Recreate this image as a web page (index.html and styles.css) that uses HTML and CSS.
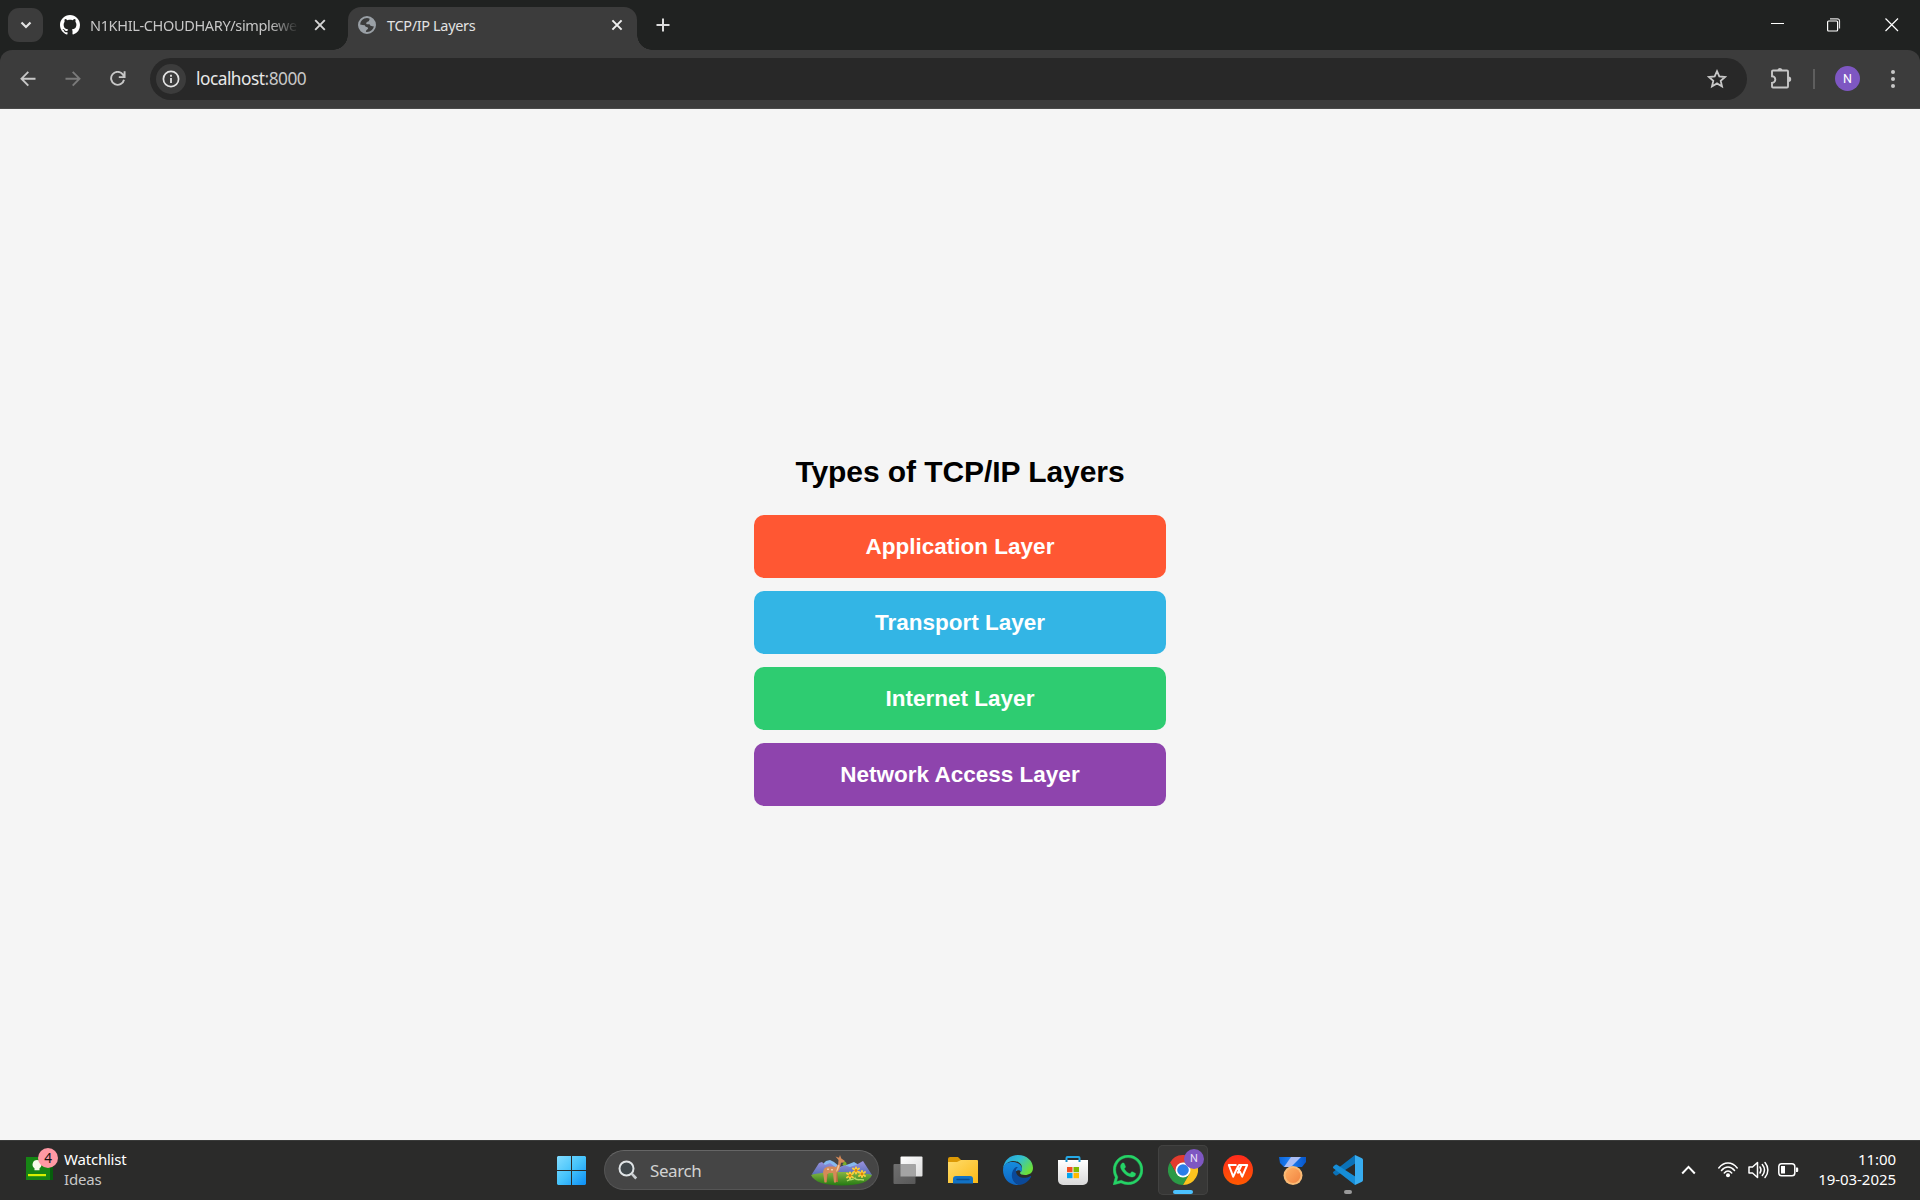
FILE: index.html
```html
<!DOCTYPE html>
<html lang="en">
<head>
<meta charset="utf-8">
<title>TCP/IP Layers</title>
<link rel="stylesheet" href="styles.css">
</head>
<body>
<header class="tabstrip">
  <button class="tab-search" aria-label="Search tabs"><svg width="12" height="8" viewBox="0 0 12 8"><path d="M1.500 1.500 6 6l4.500-4.500" fill="none" stroke="#e3e3e3" stroke-width="2.200"/></svg></button>
  <div class="tab">
    <svg class="github" width="20" height="20" viewBox="0 0 16 16"><path fill="#fff" d="M8 0C3.580 0 0 3.580 0 8c0 3.540 2.290 6.530 5.470 7.590.4.070.550-.170.550-.380 0-.190-.010-.820-.010-1.490-2.010.370-2.530-.490-2.690-.940-.090-.230-.480-.940-.820-1.130-.280-.150-.680-.520-.010-.530.630-.010 1.080.580 1.230.820.720 1.210 1.870.870 2.330.660.070-.520.280-.870.510-1.070-1.780-.2-3.640-.890-3.640-3.950 0-.870.310-1.590.820-2.150-.080-.2-.360-1.020.080-2.120 0 0 .670-.210 2.200.820.640-.180 1.320-.270 2-.270s1.360.090 2 .270c1.530-1.040 2.200-.820 2.200-.820.440 1.100.160 1.920.080 2.120.510.560.820 1.270.820 2.150 0 3.070-1.870 3.750-3.650 3.950.290.250.540.730.540 1.480 0 1.070-.010 1.930-.010 2.200 0 .210.150.460.550.380A8.010 8.010 0 0 0 16 8c0-4.420-3.580-8-8-8Z"/></svg>
    <span class="tab-title fade">N1KHIL-CHOUDHARY/simplewe</span>
    <svg class="tab-close" width="12" height="12" viewBox="0 0 12 12"><path d="m1.200 1.200 9.600 9.600m0-9.600-9.600 9.600" stroke="#d5d5d5" stroke-width="1.900"/></svg>
  </div>
  <div class="tab active">
    <svg class="globe" width="18" height="18" viewBox="0 0 18 18"><circle cx="9" cy="9" r="8" fill="#3c3c3c" stroke="#9aa0a6" stroke-width="2"/><path fill="#9aa0a6" d="M11.300 1.300c3 .9 5.500 4 5.500 7.700l-1.300 1.500-3-.8-1-1.500H8.700L8 7l1.800-1.500 1-.3.800-2zM1.300 8.300l3.200.6 2.200.4 1 1.500 1.900.4.500 1.600-1.800 1.400-.6 2.400C4 16.400 1.100 13 1.300 8.300Z"/></svg>
    <span class="tab-title">TCP/IP Layers</span>
    <svg class="tab-close" width="12" height="12" viewBox="0 0 12 12"><path d="m1.400 1.400 9.200 9.200m0-9.200-9.200 9.200" stroke="#f0f0f0" stroke-width="2"/></svg>
  </div>
  <svg class="new-tab" width="14" height="14" viewBox="0 0 14 14"><path d="M7 .5v13M.5 7h13" stroke="#dcdcdc" stroke-width="2"/></svg>
  <div class="window-controls">
    <svg width="14" height="14" viewBox="0 0 14 14"><path d="M0 5.500h13" stroke="#fff"/></svg>
    <svg width="14" height="14" viewBox="0 0 14 14"><path d="M3 .8h7.500a2 2 0 0 1 2 2v7.700" fill="none" stroke="#ddd" stroke-width="1.200"/><rect x=".6" y="3" width="10" height="10" rx="1" fill="none" stroke="#fff" stroke-width="1.200"/></svg>
    <svg width="14" height="14" viewBox="0 0 14 14"><path d="m.5.500 12.500 12.500m0-12.500L.5 13" stroke="#fff" stroke-width="1.200"/></svg>
  </div>
</header>
<nav class="toolbar">
  <div class="nav-buttons">
    <svg width="16" height="16" viewBox="0 0 16 16"><path d="M8.300.8 1.500 7.700l6.800 6.900M1.500 7.700H15.500" fill="none" stroke="#c7c7c7" stroke-width="1.900"/></svg>
    <svg width="16" height="16" viewBox="0 0 16 16"><path d="m7.700.8 6.800 6.900-6.800 6.900M14.500 7.700H.5" fill="none" stroke="#7a7a7a" stroke-width="1.900"/></svg>
    <svg width="16" height="16" viewBox="0 0 16 16"><path d="M14 8.700A6.500 6.500 0 1 1 12.800 3.400L14 5.200M14.600.2v5.900H8.800" fill="none" stroke="#c7c7c7" stroke-width="1.900"/></svg>
  </div>
  <div class="omnibox">
    <span class="site-info"><svg width="18" height="18" viewBox="0 0 18 18"><circle cx="9" cy="9" r="7.600" fill="none" stroke="#e3e3e3" stroke-width="1.700"/><path d="M9 8v5M9 4.800v1.900" stroke="#e3e3e3" stroke-width="1.800"/></svg></span>
    <span class="url">localhost<span class="port">:8000</span></span>
    <svg class="star" width="20" height="20" viewBox="0 0 20 20"><path d="m10 2.200 2.300 5.200 5.700.6-4.300 3.800 1.300 5.600-5-3-5 3 1.300-5.600L2 8l5.700-.6Z" fill="none" stroke="#c7c7c7" stroke-width="1.800"/></svg>
  </div>
  <svg class="extensions" width="21" height="21" viewBox="0 0 21 21"><path d="M2.500 2.500H16a1 1 0 0 1 1 1v15a1 1 0 0 1-1 1H2a1 1 0 0 1-1-1v-3.600a3.300 3.300 0 0 0 0-6.600V3.500a1 1 0 0 1 1-1Z" fill="none" stroke="#c7c7c7" stroke-width="1.900"/><path d="M6.500 2.500a2.500 2.500 0 0 1 5 0ZM17.500 8.500a2.700 2.700 0 0 1 0 5.400Z" fill="#c7c7c7"/></svg>
  <span class="divider"></span>
  <span class="avatar">N</span>
  <svg class="menu" width="4" height="18" viewBox="0 0 4 18"><g fill="#c7c7c7"><circle cx="2" cy="2" r="2"/><circle cx="2" cy="9" r="2"/><circle cx="2" cy="16" r="2"/></g></svg>
</nav>
<main class="page">
  <h1 class="heading">Types of TCP/IP Layers</h1>
  <div class="layers">
    <div class="layer application">Application Layer</div>
    <div class="layer transport">Transport Layer</div>
    <div class="layer internet">Internet Layer</div>
    <div class="layer network">Network Access Layer</div>
  </div>
</main>
<footer class="taskbar">
  <div class="widget">
    <span class="widget-icon">
      <svg width="27" height="23" viewBox="0 0 27 23"><path fill="#075e0c" d="M3 1h24v22H3z"/><path fill="#168514" d="M0 0h24v23H0z"/><path d="M11 3a4.500 4.500 0 0 1 2.500 8.200v2h-5v-2A4.500 4.500 0 0 1 11 3Z" fill="#f4fbe9"/><path fill="#d5ef00" d="M2 17h18v2.200H2z"/></svg>
      <span class="badge">4</span>
    </span>
    <div class="widget-text"><span>Watchlist</span><span class="sub">Ideas</span></div>
  </div>
  <div class="apps">
    <span class="app start"><svg width="29" height="29" viewBox="0 0 29 29"><defs><linearGradient id="win" x1="0" y1="0" x2="29" y2="29" gradientUnits="userSpaceOnUse"><stop stop-color="#83ddff"/><stop offset=".5" stop-color="#45c3fb"/><stop offset="1" stop-color="#0c8ef5"/></linearGradient></defs><path fill="url(#win)" d="M1 0h13v14H0V1zM15 0h13l1 1v13H15zM0 15h14v14H1l-1-1zM15 15h14v13l-1 1H15z"/></svg></span>
    <div class="search">
      <svg width="20" height="20" viewBox="0 0 20 20"><circle cx="8.500" cy="8.500" r="7" fill="#3f474b" stroke="#dfe3e5" stroke-width="2"/><path d="m13.700 13.700 4.500 4.800" stroke="#c9cdd0" stroke-width="2.600"/></svg>
      <span class="search-label">Search</span>
      <svg class="scene" width="61" height="31" viewBox="0 0 61 31">
        <defs><linearGradient id="hill" x1="0" y1="0" x2="0" y2="1"><stop stop-color="#86b544"/><stop offset="1" stop-color="#237a12"/></linearGradient><linearGradient id="mount" x1="0" y1="0" x2="0" y2="1"><stop stop-color="#9a92e0"/><stop offset="1" stop-color="#4a67ac"/></linearGradient></defs>
        <path fill="#86b9ef" d="m11 10 4-4 4-1 4 2 6 5 9-3 5-2 5 3v8H11Z"/>
        <path fill="url(#mount)" d="M1 19 8 8l3-1 3 3 5-2 8 6 6-4 6 2 6-2 7-4 9 14-10 3H4Z"/>
        <path fill="url(#hill)" d="M0 20c12-4 48-4 61 0-3 7-13 10.500-30 10.500S3 27 0 20Z"/>
        <path fill="#b76a3d" d="m15 17-1.500 10h2L17 18zm9 0 1 10h2l-.7-10z"/>
        <path fill="#d58a58" d="M13 14c2-3 8-2.500 12-2l2.200-3 .3-4-3-3.500 3.500 1.200L29 0l1.300 3.500L34 6l-1 1.500-3 .2-1 5c-.6 3-2 4-3.300 4.800L25 27.500h-2L22 18h-4l-2 1.500-.5 8h-2L12 17z"/>
        <path fill="#f2c9a0" d="M16 13.500h2V15h-2zM20 14h2v1.500h-2zM27 10l1.500.5L27 15l-2 2z"/>
        <path d="m33 7 2 3m-3 0 3-2.500" stroke="#7cae28" stroke-width="2.200"/>
        <g stroke="#f9ce3c" stroke-width="2" stroke-linecap="round"><path d="M39 17.500v6m-3-5 6 4m0-4-6 4M45 12.500v6m-3-5 6 4m0-4-6 4M51 16v6m-3-5 6 4m0-4-6 4"/></g><g fill="#dc8207"><circle cx="39" cy="20.500" r="1.400"/><circle cx="45" cy="15.500" r="1.400"/><circle cx="51" cy="19" r="1.400"/></g>
        <path d="M36 26c4-3 6 0 8-3 1 3 5 1 9 2" stroke="#b5dc68" stroke-width="1.300" fill="none"/>
      </svg>
    </div>
    <span class="app"><svg width="30" height="30" viewBox="0 0 30 30"><defs><linearGradient id="pane" x1="0" y1="0" x2="1" y2="1"><stop stop-color="#fff"/><stop offset="1" stop-color="#dcdcdc"/></linearGradient><linearGradient id="back" x1="0" y1="0" x2="1" y2="1"><stop stop-color="#707070"/><stop offset="1" stop-color="#585858"/></linearGradient></defs><rect x="7.500" y="1.500" width="22" height="20" rx="1" fill="url(#pane)"/><rect x=".5" y="9" width="22" height="20" rx="1" fill="url(#back)"/><path d="M7.500 9h15v12.500h-15z" fill="#a4a4a4"/></svg></span>
    <span class="app"><svg width="30" height="30" viewBox="0 0 30 30"><defs><linearGradient id="folder" x1="0" y1="0" x2="1" y2="1"><stop stop-color="#ffdc6b"/><stop offset="1" stop-color="#fbb916"/></linearGradient></defs><path fill="#dc9905" d="M0 4a2 2 0 0 1 2-2h8l3 3v5H0z"/><path fill="url(#folder)" d="M0 7h9l4-2h16a1 1 0 0 1 1 1v22H0z"/><path fill="#1272c4" d="M5 28.500V24a3 3 0 0 1 3-3h14a3 3 0 0 1 3 3v4.500z"/><path d="M9 24.500h12" stroke="#084c91" stroke-width="1.300" stroke-linecap="round"/></svg></span>
    <span class="app"><svg width="30" height="30" viewBox="0 0 30 30"><defs><linearGradient id="edge-a" x1="0" y1="0" x2="1" y2=".6"><stop stop-color="#249ee0"/><stop offset=".5" stop-color="#32bfd0"/><stop offset="1" stop-color="#6be039"/></linearGradient><linearGradient id="edge-b" x1="0" y1="0" x2="0" y2="1"><stop stop-color="#168cdd"/><stop offset="1" stop-color="#0d65c3"/></linearGradient></defs><path fill="url(#edge-a)" d="M0 14C1 5 7 0 15 0c9 0 15 6 15 13 0 5-4 7-8 7-3 0-5-1-5-2s2-2 2-5c0-5-5-7-9-7-5 0-9 4-10 8Z"/><path fill="url(#edge-b)" d="M0 15C0 9 5 7 9 7c6 0 10 3 10 7 0 2-1 3-1 3-1-3-7-2-8 4-.6 4 2 8 7 9C8 31 0 25 0 15Z"/><path fill="#0b4998" d="M13 12c-6 4-6 15 3 18 5 0 10-4 12-8 .5-1-.5-1-1-.8-6 3.500-13 1-14-4.200-.3-2 0-3.500 2-5Z"/></svg></span>
    <span class="app"><svg width="30" height="30" viewBox="0 0 30 30"><defs><linearGradient id="bag" x1="0" y1="0" x2="0" y2="1"><stop stop-color="#fff"/><stop offset="1" stop-color="#d9d9d9"/></linearGradient></defs><path d="M8.500 7V3a1 1 0 0 1 1-1h11a1 1 0 0 1 1 1v4" fill="none" stroke="#25a9e6" stroke-width="2"/><path fill="url(#bag)" d="M0 5h30v20a5 5 0 0 1-5 5H5a5 5 0 0 1-5-5z"/><path d="M8.500 5v2m13-2v2" stroke="#178fc7" stroke-width="2"/><path fill="#f25022" d="M9 12h5.500v5.200H9z"/><path fill="#7fba00" d="M15.500 12H21v5.200h-5.500z"/><path fill="#00a4ef" d="M9 18h5.500v5.200H9z"/><path fill="#ffb900" d="M15.500 18H21v5.200h-5.500z"/></svg></span>
    <span class="app"><svg width="30" height="30" viewBox="0 0 24 24"><path fill="#25d366" stroke="#25d366" stroke-width=".3" d="M17.472 14.382c-.297-.149-1.758-.867-2.030-.967-.273-.099-.471-.148-.670.150-.197.297-.767.966-.940 1.164-.173.199-.347.223-.644.075-.297-.150-1.255-.463-2.390-1.475-.883-.788-1.480-1.761-1.653-2.059-.173-.297-.018-.458.130-.606.134-.133.298-.347.446-.520.149-.174.198-.298.298-.497.099-.198.050-.371-.025-.520-.075-.149-.669-1.612-.916-2.207-.242-.579-.487-.500-.669-.510-.173-.008-.371-.010-.570-.010-.198 0-.520.074-.792.372-.272.297-1.040 1.016-1.040 2.479 0 1.462 1.065 2.875 1.213 3.074.149.198 2.096 3.200 5.077 4.487.709.306 1.262.489 1.694.625.712.227 1.360.195 1.871.118.571-.085 1.758-.719 2.006-1.413.248-.694.248-1.289.173-1.413-.074-.124-.272-.198-.570-.347m-5.421 7.403h-.004a9.870 9.870 0 0 1-5.031-1.378l-.361-.214-3.741.982.998-3.648-.235-.374a9.860 9.860 0 0 1-1.510-5.260c.001-5.450 4.436-9.884 9.888-9.884a9.860 9.860 0 0 1 9.884 9.892c-.003 5.450-4.437 9.884-9.885 9.884m8.413-18.297A11.815 11.815 0 0 0 12.050 0C5.495 0 .160 5.335.157 11.892c0 2.096.547 4.142 1.588 5.945L.057 24l6.305-1.654a11.882 11.882 0 0 0 5.683 1.448h.005c6.554 0 11.890-5.335 11.893-11.893a11.821 11.821 0 0 0-3.480-8.413z"/></svg></span>
    <span class="app current"><svg width="30" height="30" viewBox="0 0 48 48"><path fill="#e33b2e" d="M3.200 12a24 24 0 0 1 41.600 0H24L13.600 30Z"/><path fill="#2b9a46" d="M3.200 12A24 24 0 0 0 24 48l10.400-18H13.600Z"/><path fill="#fcc31e" d="M44.800 12A24 24 0 0 1 24 48l10.400-18L24 12Z"/><circle cx="24" cy="24" r="12" fill="#fff"/><circle cx="24" cy="24" r="9.300" fill="#2b7de9"/></svg><span class="profile">N</span></span>
    <span class="app"><svg width="30" height="30" viewBox="0 0 30 30"><defs><linearGradient id="wps" x1="0" y1="0" x2="0" y2="1"><stop stop-color="#ff2a1c"/><stop offset="1" stop-color="#ff5a00"/></linearGradient></defs><circle cx="15" cy="15" r="15" fill="url(#wps)"/><path d="M13.500 10H5.800l4.400 11.700 4.300-9.400 1.500-2.300h8.200l-5 11.700-4.200-9M18.500 10l-4 8.500" fill="none" stroke="#fff" stroke-width="2" stroke-linejoin="round"/></svg></span>
    <span class="app"><svg width="30" height="30" viewBox="0 0 30 30"><defs><linearGradient id="ribbon"><stop stop-color="#0d65d8"/><stop offset=".4" stop-color="#1e80f4"/><stop offset="1" stop-color="#0756ca"/></linearGradient><linearGradient id="coin" x1="0" y1="0" x2="1" y2="1"><stop stop-color="#ffb064"/><stop offset="1" stop-color="#f18441"/></linearGradient></defs><path fill="url(#ribbon)" d="M1 2h27v5l-4 5H6L2 8z"/><path fill="#a9bdf5" d="M13 2h10L13 12H6z"/><circle cx="15" cy="20.500" r="9.500" fill="#f9bb76"/><circle cx="15" cy="20.500" r="7.500" fill="url(#coin)"/></svg></span>
    <span class="app idle"><svg width="30" height="30" viewBox="0 0 30 30"><path fill="#0b72b8" d="m2 20-1.600-1.500c-.6-.6-.5-1.300 0-1.800L22 0l1 8L4 20.200c-.7.500-1.400.4-2-.2Z"/><path fill="#168ed8" d="M2 10 .4 11.500c-.6.600-.5 1.300 0 1.800L22 30l1-8L4 9.800c-.7-.5-1.400-.4-2 .2Z"/><path fill="#37acf0" d="M22 0l7 3.300c.7.300 1 .9 1 1.600v20.200c0 .7-.3 1.300-1 1.600L22 30z"/></svg></span>
  </div>
  <div class="tray">
    <svg class="chevron" width="15" height="10" viewBox="0 0 15 10"><path d="m1.200 8.500 6.300-6.600 6.300 6.600" fill="none" stroke="#fff" stroke-width="2"/></svg>
    <svg class="wifi" width="20" height="16" viewBox="0 0 20 16"><g fill="none" stroke="#fff" stroke-width="1.500" stroke-linecap="round"><path d="M.8 6C6-.6 14-.6 19.200 6M3.500 8.500c3.800-4.600 9.200-4.600 13 0M6.300 11c2.200-2.600 5.200-2.600 7.400 0"/></g><circle cx="10" cy="13.300" r="2" fill="#fff"/></svg>
    <svg class="volume" width="21" height="18" viewBox="0 0 21 18"><g fill="none" stroke="#fff" stroke-width="1.500" stroke-linecap="round" stroke-linejoin="round"><path d="M1 6h3.500L9.500 1.500v15L4.500 12H1ZM12 6c1.300 2 1.300 4 0 6M14.300 3.500c2.800 3.500 2.800 7.500 0 11M17 1.500c3.800 4.500 3.800 10.500 0 15"/></g></svg>
    <svg class="battery" width="21" height="14" viewBox="0 0 21 14"><rect x=".8" y=".8" width="16" height="12" rx="2.800" fill="none" stroke="#fff" stroke-width="1.500"/><path fill="#fff" d="M3 3h4v7.600H3zM18 4.500h1.200q1 0 1 1v2.600q0 1-1 1H18z"/></svg>
    <div class="clock"><span>11:00</span><span>19-03-2025</span></div>
  </div>
</footer>
</body>
</html>
```
FILE: styles.css
```css
* { box-sizing: border-box; }
body { margin: 0; width: 1920px; height: 1200px; overflow: hidden; display: flex; flex-direction: column; font-family: "Noto Sans", sans-serif; background: #202221; }
svg { display: block; flex: none; }

.tabstrip { height: 50px; flex: none; display: flex; align-items: flex-start; padding-left: 8px; }
.tab-search { width: 35px; height: 34px; margin-top: 8px; padding: 0; border: 0; border-radius: 11px; background: #3c3c3c; display: flex; align-items: center; justify-content: center; }
.tab { width: 289px; height: 43px; margin-top: 7px; display: flex; align-items: center; padding: 0 14px 7px 0; color: #c7c7c7; font-size: 14.5px; }
.tab:not(.active) { width: 305px; padding-left: 17px; padding-right: 22px; }
.active { position: relative; background: #3c3c3c; border-radius: 13px 13px 0 0; color: #e3e3e3; padding-left: 10px; }
.active::before, .active::after { content: ""; position: absolute; bottom: 0; width: 15px; height: 15px; }
.active::before { right: 100%; background: radial-gradient(circle at 0 0, transparent 14.5px, #3c3c3c 15px); }
.active::after { left: 100%; background: radial-gradient(circle at 100% 0, transparent 14.5px, #3c3c3c 15px); }
.tab-title { margin-left: 11px; white-space: nowrap; letter-spacing: -.35px; line-height: 22px; }
.fade { width: 209px; margin-left: 10px; -webkit-mask-image: linear-gradient(90deg, #000 86%, transparent); mask-image: linear-gradient(90deg, #000 86%, transparent); }
.tab-close { margin-left: auto; }
.new-tab { margin: 18px 0 0 19px; }
.window-controls { display: flex; gap: 42px; margin: 18px 21px 0 auto; }
.window-controls svg:last-child { margin-left: 2px; }

.toolbar { height: 59px; flex: none; display: flex; align-items: center; padding: 0 25px 1px 20px; border-bottom: 1px solid #4a4a4a; border-radius: 12px 12px 0 0; background: #3c3c3c; }
.nav-buttons { display: flex; gap: 29px; width: 130px; }
.omnibox { width: 1597px; height: 42px; border-radius: 21px; background: #282828; display: flex; align-items: center; padding: 0 20px 0 6px; }
.site-info { width: 30px; height: 30px; border-radius: 50%; background: #3c3c3c; display: flex; align-items: center; justify-content: center; }
.url { margin-left: 10px; color: #e8e8e8; font-size: 17.300px; letter-spacing: -.5px; }
.port { color: #c7c7c7; }
.star { margin-left: auto; }
.extensions { margin-left: 24px; }
.divider { width: 2px; height: 20px; margin-left: 21px; background: #5e5e5e; }
.avatar { width: 25px; height: 25px; margin-left: 20px; border-radius: 50%; background: #7e57c2; color: #fff; font: 12.5px/25px Roboto, sans-serif; text-align: center; }
.menu { margin-left: auto; }

.page { height: 1031px; flex: none; background: #f5f5f5; display: flex; flex-direction: column; align-items: center; padding-top: 346px; font-family: "Liberation Sans", Arial, sans-serif; }
.heading { margin: 0; font-size: 30px; line-height: 34px; letter-spacing: -.07px; }
.layers { width: 412px; margin-top: 26px; display: grid; gap: 13px; }
.layer { height: 63px; line-height: 64px; border-radius: 10px; color: #fff; font-size: 22.500px; font-weight: bold; text-align: center; }
.application { background: #ff5733; }
.transport { background: #33b5e5; }
.internet { background: #2ecc71; }
.network { background: #8e44ad; }

.taskbar { height: 60px; flex: none; display: grid; grid-template-columns: 544px 832px 544px; background: #2b2b2a; border-top: 1px solid #3a3b3a; padding-bottom: 1px; color: #fff; font-size: 15px; }
.widget { display: flex; padding-left: 26px; line-height: 20px; }
.widget-icon { position: relative; width: 27px; margin-top: 16px; }
.badge { position: absolute; left: 12px; top: -9px; width: 20px; height: 20px; border-radius: 50%; background: #ff99a4; color: #111; font-size: 13.500px; text-align: center; }
.widget-text { display: flex; flex-direction: column; margin: 8px 0 0 11px; letter-spacing: -.2px; }
.sub { color: #c8c8c8; }
.apps { display: flex; align-items: center; }
.app { position: relative; width: 55px; height: 50px; flex: none; display: flex; align-items: center; justify-content: center; }
.search { width: 275px; height: 40px; margin: 0 1px 0 5px; padding: 0 6px 0 13px; border-radius: 20px; border: 1px solid #555; border-top-color: #666; background: #454545; display: flex; align-items: center; }
.search-label { margin-left: 12px; color: #d2d2d2; font-size: 17px; letter-spacing: -.4px; }
.scene { margin-left: auto; }
.current { width: 50px; margin: 0 2px 0 3px; border-radius: 5px; background: #373736; box-shadow: inset 0 0 0 1px #424241; }
.profile { position: absolute; left: 26px; top: 4px; width: 20px; height: 20px; border-radius: 50%; background: #7e57c2; color: #e7ddf5; font: 11px/20px Roboto, sans-serif; text-align: center; }
.current::after, .idle::after { content: ""; position: absolute; bottom: 1px; left: 15px; width: 20px; height: 4px; border-radius: 2px; background: #4cc2ff; }
.idle::after { left: 24px; width: 8px; background: #9a9a9a; }
.tray { display: flex; align-items: center; padding-right: 24px; }
.chevron { margin-left: 305px; }
.wifi { margin-left: 22px; }
.volume { margin-left: 10px; }
.battery { margin-left: 9px; }
.clock { margin: -3px 0 0 auto; display: flex; flex-direction: column; text-align: right; line-height: 20px; letter-spacing: -.05px; }
```
